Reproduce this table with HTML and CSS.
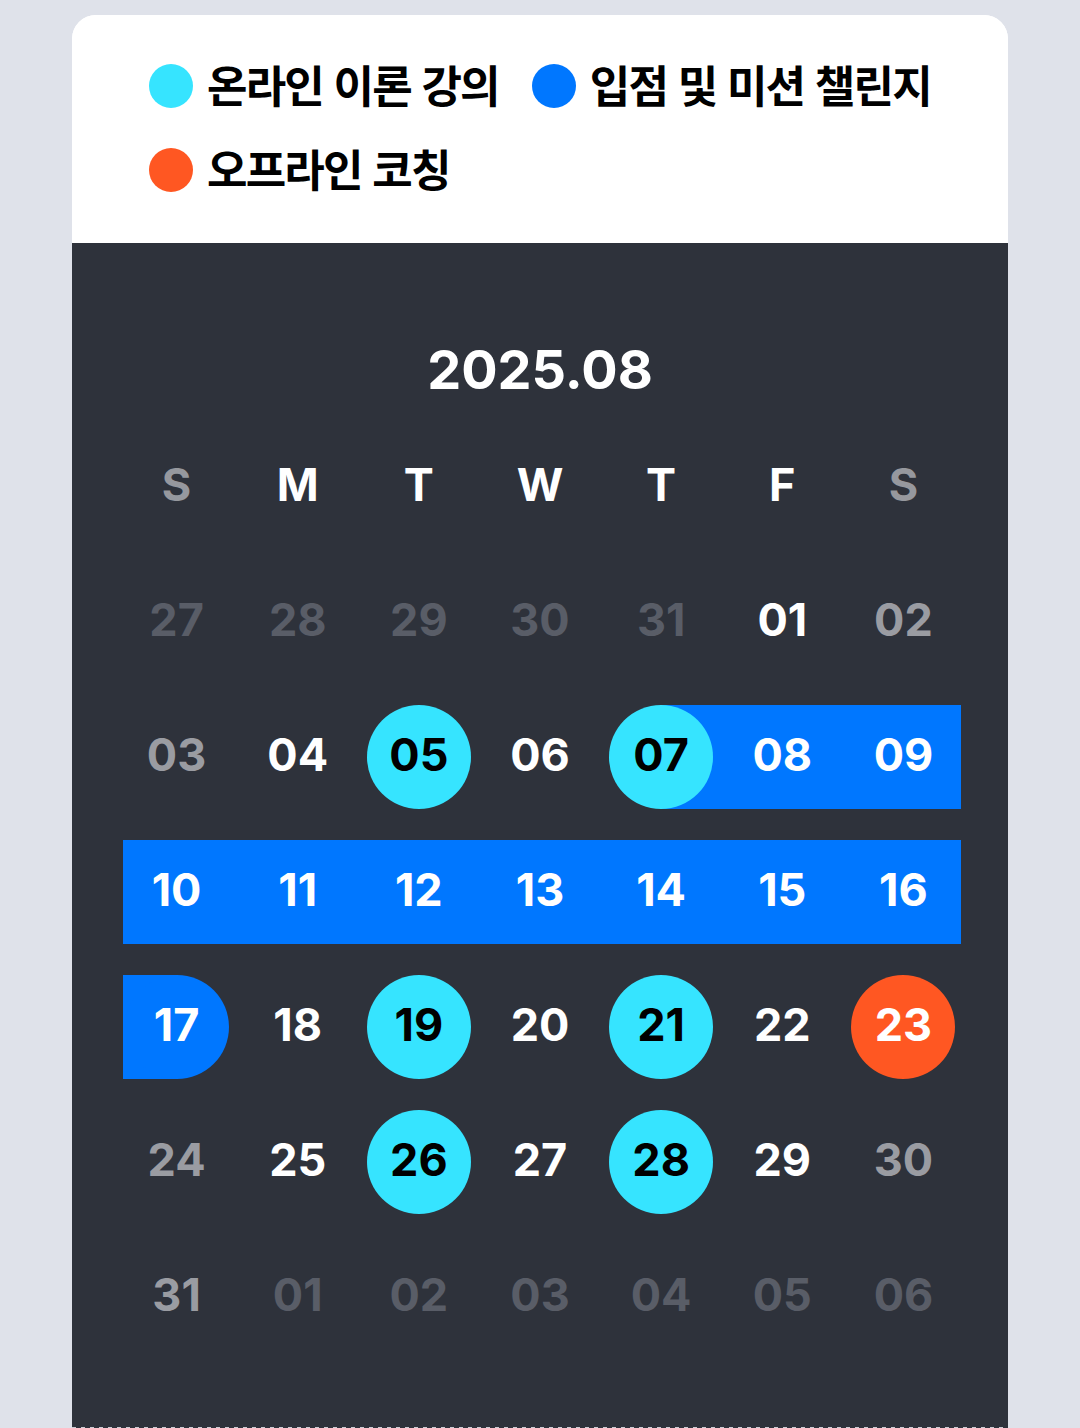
FILE: index.html
```html
<!DOCTYPE html>
<html lang="ko">
<head>
<meta charset="utf-8">
<title>2025.08 일정</title>
<link rel="stylesheet" href="styles.css">
</head>
<body>
<div class="card">
  <div class="legend">
    <div class="legend-item"><span class="dot dot-cyan"></span><span class="legend-label">온라인 이론 강의</span></div>
    <div class="legend-item"><span class="dot dot-blue"></span><span class="legend-label">입점 및 미션 챌린지</span></div>
    <div class="legend-item"><span class="dot dot-orange"></span><span class="legend-label">오프라인 코칭</span></div>
  </div>
  <div class="calendar">
    <h2 class="month">2025.08</h2>
    <div class="weekdays">
      <span class="wd wd-weekend">S</span>
      <span class="wd">M</span>
      <span class="wd">T</span>
      <span class="wd">W</span>
      <span class="wd">T</span>
      <span class="wd">F</span>
      <span class="wd wd-weekend">S</span>
    </div>
    <div class="weeks">
      <div class="week">
        <div class="day muted"><span class="num">27</span></div>
        <div class="day muted"><span class="num">28</span></div>
        <div class="day muted"><span class="num">29</span></div>
        <div class="day muted"><span class="num">30</span></div>
        <div class="day muted"><span class="num">31</span></div>
        <div class="day"><span class="num">01</span></div>
        <div class="day weekend"><span class="num">02</span></div>
      </div>
      <div class="week">
        <div class="day weekend"><span class="num">03</span></div>
        <div class="day"><span class="num">04</span></div>
        <div class="day mark-cyan"><span class="num">05</span></div>
        <div class="day"><span class="num">06</span></div>
        <div class="day band band-start mark-cyan"><span class="num">07</span></div>
        <div class="day band"><span class="num">08</span></div>
        <div class="day band band-last"><span class="num">09</span></div>
      </div>
      <div class="week">
        <div class="day band band-first"><span class="num">10</span></div>
        <div class="day band"><span class="num">11</span></div>
        <div class="day band"><span class="num">12</span></div>
        <div class="day band"><span class="num">13</span></div>
        <div class="day band"><span class="num">14</span></div>
        <div class="day band"><span class="num">15</span></div>
        <div class="day band band-last"><span class="num">16</span></div>
      </div>
      <div class="week">
        <div class="day band band-first band-end mark-blue"><span class="num">17</span></div>
        <div class="day"><span class="num">18</span></div>
        <div class="day mark-cyan"><span class="num">19</span></div>
        <div class="day"><span class="num">20</span></div>
        <div class="day mark-cyan"><span class="num">21</span></div>
        <div class="day"><span class="num">22</span></div>
        <div class="day mark-orange"><span class="num">23</span></div>
      </div>
      <div class="week">
        <div class="day weekend"><span class="num">24</span></div>
        <div class="day"><span class="num">25</span></div>
        <div class="day mark-cyan"><span class="num">26</span></div>
        <div class="day"><span class="num">27</span></div>
        <div class="day mark-cyan"><span class="num">28</span></div>
        <div class="day"><span class="num">29</span></div>
        <div class="day weekend"><span class="num">30</span></div>
      </div>
      <div class="week">
        <div class="day weekend"><span class="num">31</span></div>
        <div class="day muted"><span class="num">01</span></div>
        <div class="day muted"><span class="num">02</span></div>
        <div class="day muted"><span class="num">03</span></div>
        <div class="day muted"><span class="num">04</span></div>
        <div class="day muted"><span class="num">05</span></div>
        <div class="day muted"><span class="num">06</span></div>
      </div>
    </div>
  </div>
  <div class="perforation"></div>
</div>
</body>
</html>
```
FILE: styles.css
```css
* { box-sizing: border-box; }

body {
  margin: 0;
  background: #dfe2ea;
  font-family: Inter, "Noto Sans CJK KR", sans-serif;
}

.card {
  margin: 15px 72px 0;
  width: 936px;
  border-radius: 24px 24px 0 0;
  overflow: hidden;
  background: #ffffff;
}

/* legend */
.legend {
  display: flex;
  flex-wrap: wrap;
  column-gap: 33px;
  row-gap: 24px;
  padding: 41px 40px 43px 77px;
  background: #ffffff;
}

.legend-item {
  display: flex;
  align-items: center;
  gap: 14px;
  height: 60px;
}

.dot {
  width: 44px;
  height: 44px;
  border-radius: 50%;
  flex: none;
}
.dot-cyan { background: #36e4ff; }
.dot-blue { background: #0077ff; }
.dot-orange { background: #ff5722; }

.legend-label {
  font-family: "Noto Sans CJK KR", sans-serif;
  font-weight: 700;
  font-size: 44px;
  line-height: 60px;
  padding-bottom: 4px;
  color: #000000;
  letter-spacing: -1.8px;
}

/* calendar */
.calendar {
  background: #2e323b;
  padding: 95px 44px 78px;
}

.month {
  margin: 0;
  text-align: center;
  color: #ffffff;
  font-family: Inter, sans-serif;
  font-weight: 700;
  font-size: 54px;
  line-height: 64px;
  letter-spacing: 0;
}

.weekdays {
  display: grid;
  grid-template-columns: repeat(7, 1fr);
  margin-top: 53px;
  height: 60px;
}

.wd {
  display: flex;
  align-items: center;
  justify-content: center;
  color: #ffffff;
  font-family: Inter, sans-serif;
  font-weight: 700;
  font-size: 45px;
  line-height: 60px;
}
.wd-weekend { color: #96989e; }

.weeks {
  margin-top: 55px;
  display: flex;
  flex-direction: column;
  gap: 31px;
}

.week {
  display: grid;
  grid-template-columns: repeat(7, 1fr);
}

.day {
  position: relative;
  height: 104px;
  display: flex;
  align-items: center;
  justify-content: center;
  color: #ffffff;
}

.num {
  position: relative;
  z-index: 1;
  width: 104px;
  height: 104px;
  padding-bottom: 5px;
  border-radius: 50%;
  display: flex;
  align-items: center;
  justify-content: center;
  font-family: Inter, sans-serif;
  font-weight: 700;
  font-size: 45px;
  line-height: 1;
}

.day.muted { color: #595d67; }
.day.weekend { color: #9a9ca2; }

.mark-cyan .num { background: #36e4ff; color: #000000; }
.mark-blue .num { background: #0077ff; color: #ffffff; }
.mark-orange .num { background: #ff5722; color: #ffffff; }

/* range band */
.band::before {
  content: "";
  position: absolute;
  top: 0;
  bottom: 0;
  left: 0;
  right: 0;
  background: #0077ff;
}
.band-start::before { left: 50%; }
.band-end::before { right: 50%; }
.band-first::before { left: 7px; }
.band-last::before { right: 3px; }

.perforation {
  height: 1px;
  background: #2e323b repeating-linear-gradient(90deg, #c9ccd3 0 4px, transparent 4px 9px);
}
```
